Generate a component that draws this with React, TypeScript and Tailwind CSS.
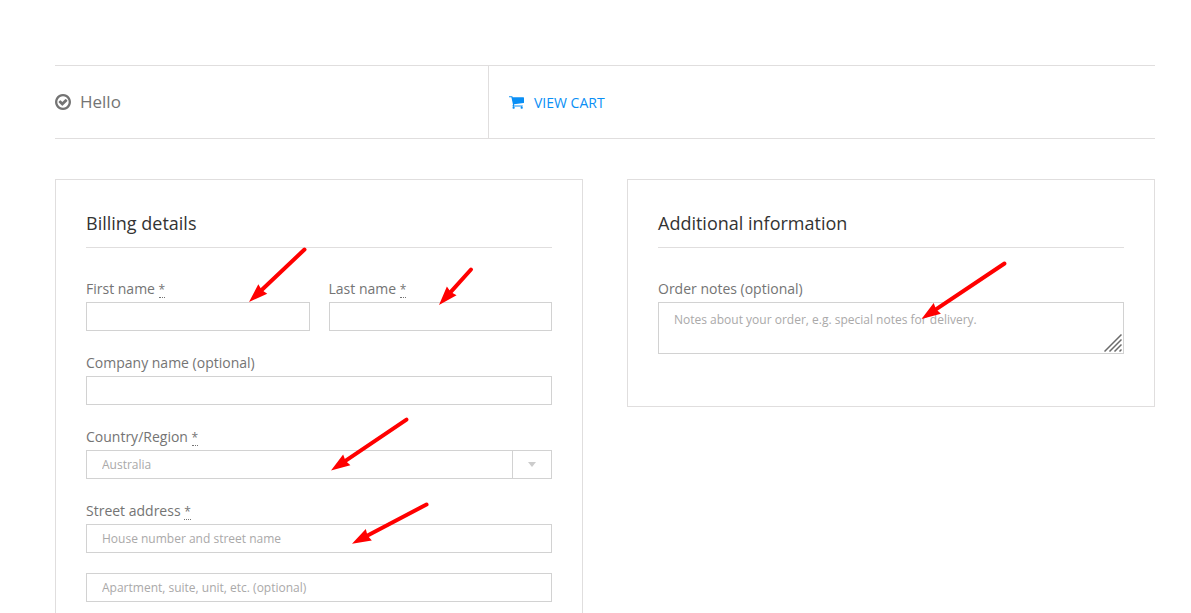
import type { ReactNode } from "react";

const field =
  "block h-[29px] w-full rounded-none border border-[#d2d2d2] bg-white px-[15px] text-[12px] text-[#aaa9a9] placeholder:text-[#aaa9a9] placeholder:opacity-100 outline-none focus:border-[#a0a0a0]";

function Label({ htmlFor, required, children }: { htmlFor: string; required?: boolean; children: ReactNode }) {
  return (
    <label htmlFor={htmlFor} className="block h-[22px] text-[14px] leading-[18px] text-[#747474]">
      {children}
      {required && (
        <>
          {" "}
          <abbr className="inline-block h-4 border-b border-dotted border-[#747474] text-[12px] leading-4 no-underline">*</abbr>
        </>
      )}
    </label>
  );
}

function Card({ title, children }: { title: string; children: ReactNode }) {
  return (
    <section className="border border-[#e0dede] p-[30px]">
      <h3 className="mb-8 border-b border-[#e0dede] pb-[10px] text-[18px] leading-[27px] text-[#333333]">{title}</h3>
      {children}
    </section>
  );
}

function CheckCircleIcon() {
  return (
    <svg aria-hidden="true" className="size-4 shrink-0" viewBox="128 128 1536 1536" fill="currentColor">
      <path d="M1299 813l-422 422q-19 19-45 19t-45-19l-294-294q-19-19-19-45t19-45l102-102q19-19 45-19t45 19l147 147 275-275q19-19 45-19t45 19l102 102q19 19 19 45t-19 45zm141 83q0-148-73-273t-198-198-273-73-273 73-198 198-73 273 73 273 198 198 273 73 273-73 198-198 73-273zm224 0q0 209-103 385.5t-279.5 279.5-385.5 103-385.5-103-279.5-279.5-103-385.5 103-385.5 279.5-279.5 385.5-103 385.5 103 279.5 279.5 103 385.5z" />
    </svg>
  );
}

function CartIcon() {
  return (
    <svg aria-hidden="true" className="h-[13px] w-[15px] shrink-0" viewBox="0 256 1664 1408" fill="currentColor">
      <path d="M640 1536q0 52-38 90t-90 38-90-38-38-90 38-90 90-38 90 38 38 90zm896 0q0 52-38 90t-90 38-90-38-38-90 38-90 90-38 90 38 38 90zm128-1088v512q0 24-16.5 42.5t-40.5 21.5l-1044 122q13 60 13 70 0 16-24 64h920q26 0 45 19t19 45-19 45-45 19h-1024q-26 0-45-19t-19-45q0-11 8-31.5t16-36 21.5-40 15.5-29.5l-177-823h-204q-26 0-45-19t-19-45 19-45 45-19h256q16 0 28.5 6.5t19.5 15.5 13 24.5 8 26 5.5 29.5 4.5 26h1201q26 0 45 19t19 45z" />
    </svg>
  );
}

const arrows = [
  { tail: [304.5, 249.5], tip: [249, 302] },
  { tail: [471, 269.5], tip: [439, 305] },
  { tail: [406.5, 419.7], tip: [331, 470.5] },
  { tail: [426.5, 504.5], tip: [352, 543.7] },
  { tail: [1004.5, 263.5], tip: [921.5, 319] },
];

function Arrows() {
  return (
    <svg aria-hidden="true" className="pointer-events-none absolute top-0 left-0" width="1191" height="613" fill="#ff0000">
      {arrows.map(({ tail, tip }) => {
        const length = Math.hypot(tail[0] - tip[0], tail[1] - tip[1]);
        const angle = (Math.atan2(tail[1] - tip[1], tail[0] - tip[0]) * 180) / Math.PI;
        return (
          <g key={tip[0]} transform={`translate(${tip[0]} ${tip[1]}) rotate(${angle})`}>
            <path d="M0 0L19 -6.5L17.5 0L19 6.5Z" />
            <path d={`M16 0H${length}`} stroke="#ff0000" strokeWidth="4" strokeLinecap="round" />
          </g>
        );
      })}
    </svg>
  );
}

export default function App() {
  return (
    <main className="relative h-screen overflow-hidden bg-white pt-[65px] pr-9 pl-[55px] font-['Open_Sans','Noto_Sans',sans-serif]">
      <header className="flex h-[74px] border-y border-[#e0dede]">
        <div className="flex w-[434px] items-center gap-[9px] border-r border-[#e0dede] text-[17px] text-[#747474]">
          <CheckCircleIcon />
          <span>Hello</span>
        </div>
        <div className="flex flex-1 items-center pl-5">
          <a href="#cart" className="flex items-center gap-[10px] text-[14px] text-[#0a8ff5]">
            <CartIcon />
            VIEW CART
          </a>
        </div>
      </header>

      <form className="mt-10 grid grid-cols-2 items-start gap-11">
        <Card title="Billing details">
          <div className="flex flex-col gap-[23px]">
            <div className="grid grid-cols-2 gap-[19px]">
              <div>
                <Label htmlFor="first-name" required>First name</Label>
                <input id="first-name" type="text" className={field} />
              </div>
              <div>
                <Label htmlFor="last-name" required>Last name</Label>
                <input id="last-name" type="text" className={field} />
              </div>
            </div>
            <div>
              <Label htmlFor="company">Company name (optional)</Label>
              <input id="company" type="text" className={field} />
            </div>
            <div>
              <Label htmlFor="country" required>Country/Region</Label>
              <div className="relative">
                <select id="country" className={`${field} appearance-none`}>
                  <option>Australia</option>
                </select>
                <span className="pointer-events-none absolute inset-y-0 right-0 flex w-10 items-center justify-center border border-[#d2d2d2]">
                  <svg aria-hidden="true" className="h-[5px] w-2" viewBox="0 0 8 5" fill="#cccccc">
                    <path d="M0 0H8L4 5Z" />
                  </svg>
                </span>
              </div>
            </div>
            <div>
              <Label htmlFor="street" required>Street address</Label>
              <input id="street" type="text" placeholder="House number and street name" className={field} />
              <input
                type="text"
                aria-label="Apartment, suite, unit, etc. (optional)"
                placeholder="Apartment, suite, unit, etc. (optional)"
                className={`${field} mt-5`}
              />
            </div>
          </div>
        </Card>

        <Card title="Additional information">
          <div className="pb-[22px]">
            <Label htmlFor="notes">Order notes (optional)</Label>
            <div className="relative">
              <textarea
                id="notes"
                placeholder="Notes about your order, e.g. special notes for delivery."
                className="block h-[52px] w-full resize-none border border-[#d2d2d2] bg-white px-[15px] py-2 text-[12px] leading-[18px] text-[#aaa9a9] outline-none placeholder:text-[#aaa9a9] placeholder:opacity-100"
              />
              <svg aria-hidden="true" className="pointer-events-none absolute right-[2px] bottom-[2px] size-[18px]" viewBox="0 0 18 18" stroke="#6b6b6b" strokeWidth="1.5">
                <path d="M0.5 17.5L17.5 0.5M5.5 17.5L17.5 5.5M10.5 17.5L17.5 10.5M15.5 17.5L17.5 15.5" />
              </svg>
            </div>
          </div>
        </Card>
      </form>
      <Arrows />
    </main>
  );
}
